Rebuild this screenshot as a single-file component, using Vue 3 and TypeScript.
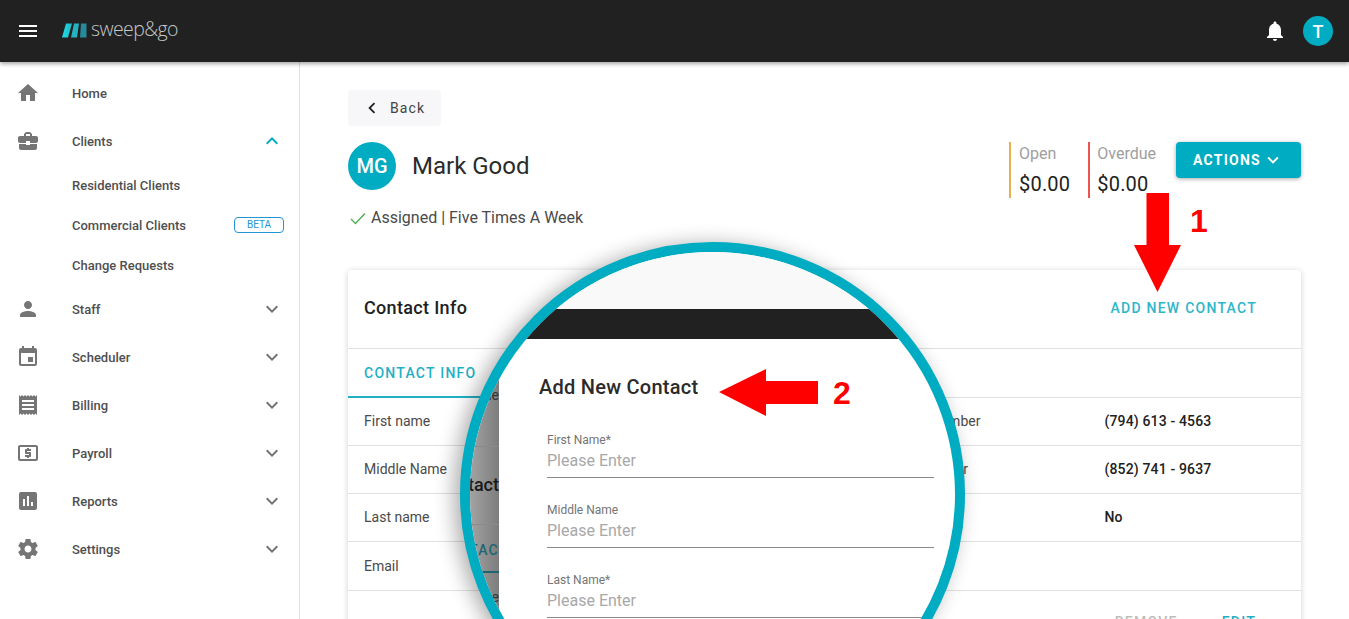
<script setup lang="ts">
interface NavItem {
  label: string
  icon: string
  open?: boolean
  noChevron?: boolean
  children?: { label: string; beta?: boolean }[]
}

const icons = {
  home: 'M10 20v-6h4v6h5v-8h3L12 3 2 12h3v8z',
  clients:
    'M10 16v-1H3.01L3 19c0 1.11.89 2 2 2h14c1.11 0 2-.89 2-2v-4h-7v1h-4zm10-9h-4.01V5l-2-2h-4l-2 2v2H4c-1.1 0-2 .9-2 2v3c0 1.11.89 2 2 2h6v-2h4v2h6c1.1 0 2-.9 2-2V9c0-1.1-.9-2-2-2zm-6 0h-4V5h4v2z',
  staff:
    'M12 12c2.21 0 4-1.79 4-4s-1.79-4-4-4-4 1.79-4 4 1.79 4 4 4zm0 2c-2.67 0-8 1.34-8 4v2h16v-2c0-2.66-5.33-4-8-4z',
  scheduler:
    'M17 12h-5v5h5v-5zM16 1v2H8V1H6v2H5c-1.11 0-1.99.9-1.99 2L3 19c0 1.1.89 2 2 2h14c1.1 0 2-.9 2-2V5c0-1.1-.9-2-2-2h-1V1h-2zm3 18H5V8h14v11z',
  billing:
    'M18 17H6v-2h12v2zm0-4H6v-2h12v2zm0-4H6V7h12v2zM3 22l1.5-1.5L6 22l1.5-1.5L9 22l1.5-1.5L12 22l1.5-1.5L15 22l1.5-1.5L18 22l1.5-1.5L21 22V2l-1.5 1.5L18 2l-1.5 1.5L15 2l-1.5 1.5L12 2l-1.5 1.5L9 2 7.5 3.5 6 2 4.5 3.5 3 2v20z',
  payroll:
    'M11 17h2v-1h1c.55 0 1-.45 1-1v-3c0-.55-.45-1-1-1h-3v-1h4V8h-2V7h-2v1h-1c-.55 0-1 .45-1 1v3c0 .55.45 1 1 1h3v1H9v2h2v1zm9-13H4c-1.11 0-1.99.89-1.99 2L2 18c0 1.11.89 2 2 2h16c1.11 0 2-.89 2-2V6c0-1.11-.89-2-2-2zm0 14H4V6h16v12z',
  reports:
    'M19 3H5c-1.1 0-2 .9-2 2v14c0 1.1.9 2 2 2h14c1.1 0 2-.9 2-2V5c0-1.1-.9-2-2-2zM9 17H7v-7h2v7zm4 0h-2V7h2v10zm4 0h-2v-4h2v4z',
  settings:
    'M19.43 12.98c.04-.32.07-.64.07-.98s-.03-.66-.07-.98l2.11-1.65c.19-.15.24-.42.12-.64l-2-3.46c-.12-.22-.39-.3-.61-.22l-2.49 1c-.52-.4-1.08-.73-1.69-.98l-.38-2.65C14.46 2.18 14.25 2 14 2h-4c-.25 0-.46.18-.49.42l-.38 2.65c-.61.25-1.17.59-1.69.98l-2.49-1c-.23-.09-.49 0-.61.22l-2 3.46c-.13.22-.07.49.12.64l2.11 1.65c-.04.32-.07.65-.07.98s.03.66.07.98l-2.11 1.65c-.19.15-.24.42-.12.64l2 3.46c.12.22.39.3.61.22l2.49-1c.52.4 1.08.73 1.69.98l.38 2.65c.03.24.24.42.49.42h4c.25 0 .46-.18.49-.42l.38-2.65c.61-.25 1.17-.59 1.69-.98l2.49 1c.23.09.49 0 .61-.22l2-3.46c.12-.22.07-.49-.12-.64l-2.11-1.65zM12 15.5c-1.93 0-3.5-1.57-3.5-3.5s1.57-3.5 3.5-3.5 3.5 1.57 3.5 3.5-1.57 3.5-3.5 3.5z',
}

const expandMore = 'M16.59 8.59L12 13.17 7.41 8.59 6 10l6 6 6-6z'
const expandLess = 'M12 8l-6 6 1.41 1.41L12 10.83l4.59 4.58L18 14z'

const nav: NavItem[] = [
  { label: 'Home', icon: icons.home, noChevron: true },
  {
    label: 'Clients',
    icon: icons.clients,
    open: true,
    children: [
      { label: 'Residential Clients' },
      { label: 'Commercial Clients', beta: true },
      { label: 'Change Requests' },
    ],
  },
  { label: 'Staff', icon: icons.staff },
  { label: 'Scheduler', icon: icons.scheduler },
  { label: 'Billing', icon: icons.billing },
  { label: 'Payroll', icon: icons.payroll },
  { label: 'Reports', icon: icons.reports },
  { label: 'Settings', icon: icons.settings },
]

const rows = [
  { left: 'First name', leftValue: 'Mark', right: 'Private Phone Number', rightValue: '(794) 613 - 4563' },
  { left: 'Middle Name', leftValue: '', right: 'Main Phone Number', rightValue: '(852) 741 - 9637' },
  { left: 'Last name', leftValue: 'Good', right: 'Gets SMS', rightValue: 'No' },
  { left: 'Email', leftValue: 'mark@example.com', right: '', rightValue: '', tall: true },
]

const fields = ['First Name*', 'Middle Name', 'Last Name*']
</script>

<template>
  <div class="page">
    <header class="topbar">
      <svg class="icon menu" viewBox="0 0 24 24"><path d="M3 18h18v-2H3v2zm0-5h18v-2H3v2zm0-7v2h18V6H3z" /></svg>
      <div class="logo">
        <svg width="25" height="15" viewBox="0 0 25 15">
          <defs>
            <linearGradient id="logo-a" x1="0" y1="0" x2="1" y2="0">
              <stop offset="0" stop-color="#1fe0e6" />
              <stop offset="1" stop-color="#1fb7c4" />
            </linearGradient>
          </defs>
          <polygon points="4,0.5 10,0.5 6,14.5 0,14.5" fill="url(#logo-a)" />
          <polygon points="12,0.5 17,0.5 15,14.5 9,14.5" fill="#25b3c2" />
          <polygon points="19,0.5 24.5,0.5 24.5,14.5 18,14.5" fill="#258a99" />
        </svg>
        <span class="logo-text">sweep&amp;go</span>
      </div>
      <div class="topbar-right">
        <svg class="icon bell" viewBox="0 0 24 24">
          <path d="M12 22c1.1 0 2-.9 2-2h-4c0 1.1.89 2 2 2zm6-6v-5c0-3.07-1.64-5.64-4.5-6.32V4c0-.83-.67-1.5-1.5-1.5s-1.5.67-1.5 1.5v.68C7.63 5.36 6 7.92 6 11v5l-2 2v1h16v-1l-2-2z" />
        </svg>
        <div class="user-avatar">T</div>
      </div>
    </header>

    <div class="body">
      <aside class="sidebar">
        <template v-for="item in nav" :key="item.label">
          <div class="nav-row">
            <svg class="icon nav-icon" viewBox="0 0 24 24"><path :d="item.icon" /></svg>
            <span class="nav-label">{{ item.label }}</span>
            <svg
              v-if="!item.noChevron"
              class="icon chevron"
              :class="{ open: item.open }"
              viewBox="0 0 24 24"
            >
              <path :d="item.open ? expandLess : expandMore" />
            </svg>
          </div>
          <div v-for="child in item.children" :key="child.label" class="nav-child">
            <span>{{ child.label }}</span>
            <span v-if="child.beta" class="beta">BETA</span>
          </div>
        </template>
      </aside>

      <main class="content">
        <button type="button" class="back">
          <svg class="icon" viewBox="0 0 24 24"><path d="M15.41 7.41L14 6l-6 6 6 6 1.41-1.41L10.83 12z" /></svg>
          Back
        </button>

        <div class="client-head">
          <div class="client-info">
            <div class="client-name-row">
              <div class="avatar">MG</div>
              <h1>Mark Good</h1>
            </div>
            <div class="status">
              <svg width="16" height="16" viewBox="0 0 16 16">
                <polyline points="1,9 5.5,13.5 15,3.5" fill="none" stroke="#4caf50" stroke-width="1.4" />
              </svg>
              Assigned | Five Times A Week
            </div>
          </div>
          <div class="balances">
            <div class="balance open-bal">
              <span class="bal-label">Open</span>
              <span class="bal-value">$0.00</span>
            </div>
            <div class="balance overdue-bal">
              <span class="bal-label">Overdue</span>
              <span class="bal-value">$0.00</span>
            </div>
            <button type="button" class="actions">
              ACTIONS
              <svg class="icon" viewBox="0 0 24 24"><path :d="expandMore" /></svg>
            </button>
          </div>
        </div>

        <section class="card">
          <div class="card-head">
            <h2>Contact Info</h2>
            <span class="add-contact">ADD NEW CONTACT</span>
          </div>
          <div class="tabs">
            <span class="tab">CONTACT INFO</span>
          </div>
          <div v-for="row in rows" :key="row.left" class="row" :class="{ tall: row.tall }">
            <div class="cell">
              <span class="cell-label">{{ row.left }}</span>
              <span class="cell-value">{{ row.leftValue }}</span>
            </div>
            <div class="cell">
              <span class="cell-label">{{ row.right }}</span>
              <span class="cell-value">{{ row.rightValue }}</span>
            </div>
          </div>
          <div class="card-actions">
            <span class="remove">REMOVE</span>
            <span class="edit">EDIT</span>
          </div>
        </section>
      </main>
    </div>

    <!-- magnifier callout sitting over the page -->
    <div class="lens">
      <div class="lens-top"></div>
      <div class="lens-band"></div>
      <div class="lens-body">
        <div class="lens-strip">
          <div class="strip-row strip-a"><span>Name</span></div>
          <div class="strip-row strip-b"><b>Contact</b></div>
          <div class="strip-row strip-c"><span>CONTAC</span></div>
          <div class="strip-row strip-d"><span>Name</span></div>
        </div>
        <div class="modal">
          <h3>Add New Contact</h3>
          <div v-for="field in fields" :key="field" class="field">
            <label>{{ field }}</label>
            <span class="placeholder">Please Enter</span>
          </div>
        </div>
      </div>
    </div>

    <svg class="arrow arrow-one" width="47" height="100" viewBox="0 0 47 100">
      <polygon points="12.5,0 35,0 35,52 47,52 23.5,99 0,52 12.5,52" fill="#ff0000" />
    </svg>
    <span class="callout-num num-one">1</span>
    <svg class="arrow arrow-two" width="99" height="47" viewBox="0 0 99 47">
      <polygon points="0,23 47,0 47,12 99,12 99,35 47,35 47,47" fill="#ff0000" />
    </svg>
    <span class="callout-num num-two">2</span>
  </div>
</template>

<style scoped>
.page {
  position: relative;
  height: 619px;
  overflow: hidden;
  background: #fff;
  color: #212121;
  font-family: Roboto, 'Liberation Sans', sans-serif;
}

.icon { width: 24px; height: 24px; fill: currentColor; flex: none; display: block; }

/* top bar */
.topbar {
  position: relative;
  z-index: 2;
  height: 62px;
  background: #212121;
  box-shadow: 0 2px 4px rgba(0, 0, 0, 0.35);
  display: flex;
  align-items: center;
  padding: 0 16px;
  color: #fff;
}
.menu { margin-top: -1px; }
.logo { display: flex; align-items: center; gap: 4px; margin: -2px 0 0 22px; }
.logo svg { display: block; }
.logo-text {
  font-family: 'Open Sans', sans-serif;
  font-weight: 300;
  font-size: 19.5px;
  letter-spacing: -0.6px;
  color: #c4c8ca;
  line-height: 24px;
  margin-top: -3px;
}
.topbar-right { margin-left: auto; display: flex; align-items: center; gap: 16px; }
.user-avatar {
  width: 30px;
  height: 30px;
  border-radius: 50%;
  background: #00acc1;
  display: flex;
  align-items: center;
  justify-content: center;
  font-size: 18px;
  font-weight: 500;
}

/* sidebar */
.body { display: flex; height: 557px; }
.sidebar {
  width: 300px;
  flex: none;
  box-sizing: border-box;
  border-right: 1px solid #e0e0e0;
  padding: 7px 16px 0;
}
.nav-row { height: 48px; display: flex; align-items: center; }
.nav-icon { color: #757575; }
.nav-label { margin-left: 32px; font-size: 13px; font-weight: 500; color: #4f4f4f; }
.chevron { margin-left: auto; margin-right: -1px; color: #757575; }
.chevron.open { color: #00acc1; }
.nav-child {
  height: 40px;
  display: flex;
  align-items: center;
  justify-content: space-between;
  padding-left: 56px;
  margin-right: -1px;
  font-size: 13px;
  font-weight: 500;
  color: #4f4f4f;
}
.beta {
  width: 50px;
  height: 16px;
  box-sizing: border-box;
  border: 1px solid #2196d3;
  border-radius: 4px;
  color: #2196d3;
  font-size: 10px;
  font-weight: 400;
  line-height: 14px;
  text-align: center;
}

/* main column */
.content { flex: 1; padding: 28px 48px 0; min-width: 0; }
.back {
  width: 93px;
  height: 36px;
  border: 0;
  border-radius: 4px;
  background: #f7f7f9;
  display: flex;
  align-items: center;
  gap: 7px;
  padding: 0 0 0 13px;
  color: #424242;
  font-family: inherit;
  font-size: 14px;
  letter-spacing: 1.1px;
}
.back .icon { width: 22px; height: 22px; color: #212121; }

.client-head { display: flex; justify-content: space-between; margin-top: 16px; }
.client-name-row { display: flex; align-items: center; gap: 16px; }
.avatar {
  width: 48px;
  height: 48px;
  border-radius: 50%;
  background: #00acc1;
  color: #fff;
  display: flex;
  align-items: center;
  justify-content: center;
  font-size: 20px;
  font-weight: 500;
}
h1 { margin: 0; font-size: 24px; font-weight: 400; color: #2b2b2b; }
.status {
  display: flex;
  align-items: center;
  gap: 5px;
  margin: 18px 0 0 2px;
  height: 19px;
  font-size: 16px;
  color: #4a4a4a;
}
.balances { display: flex; align-items: flex-start; }
.balance {
  height: 56px;
  box-sizing: border-box;
  padding-left: 8px;
  display: flex;
  flex-direction: column;
  justify-content: space-between;
  border-left: 2px solid #e8b04f;
  margin-right: 18px;
}
.overdue-bal { border-left-color: #ef5350; margin-right: 20px; padding-left: 7px; }
.bal-label { font-size: 16px; color: #9e9e9e; line-height: 22px; padding-top: 1px; }
.bal-value { font-size: 20px; color: #212121; line-height: 28px; letter-spacing: 0.2px; }
.actions {
  width: 125px;
  height: 36px;
  border: 0;
  border-radius: 4px;
  background: #00acc1;
  color: #fff;
  box-shadow: 0 1px 4px rgba(0, 0, 0, 0.35);
  display: flex;
  align-items: center;
  justify-content: center;
  gap: 1px;
  font-family: inherit;
  font-size: 14px;
  font-weight: 700;
  letter-spacing: 1.25px;
}
.actions .icon { width: 22px; height: 22px; }

/* contact card */
.card {
  margin-top: 43px;
  border-radius: 4px;
  background: #fff;
  box-shadow: 0 1px 6px rgba(0, 0, 0, 0.18);
}
.card-head {
  height: 79px;
  box-sizing: border-box;
  padding: 0 44px 3px 16px;
  display: flex;
  align-items: center;
  justify-content: space-between;
  border-bottom: 1px solid #e0e0e0;
}
h2 { margin: 0; font-size: 18px; font-weight: 500; letter-spacing: 0.33px; color: #212121; }
.add-contact { font-size: 14px; font-weight: 500; letter-spacing: 1.25px; color: #2fb5c9; }
.tabs { height: 48px; border-bottom: 1px solid #e0e0e0; display: flex; }
.tab {
  width: 144px;
  box-sizing: border-box;
  padding-left: 16px;
  line-height: 48px;
  height: 49px;
  font-size: 14px;
  font-weight: 500;
  letter-spacing: 1.25px;
  color: #1fb0c6;
  border-bottom: 2px solid #1fb0c6;
}
.row {
  display: grid;
  grid-template-columns: 1fr 1fr;
  height: 47px;
  border-bottom: 1px solid #e0e0e0;
}
.row.tall { height: 48px; }
.cell { display: grid; grid-template-columns: 280px 1fr; align-items: center; padding: 0 0 2px 16px; font-size: 14px; }
.row.tall .cell { padding-bottom: 0; }
.cell-label { color: #4a4a4a; margin-right: -16px; }
.cell-value { font-weight: 500; color: #212121; margin-left: -16px; letter-spacing: 0.15px; }
.card-actions {
  display: flex;
  justify-content: flex-end;
  gap: 44px;
  padding: 23px 45px 20px 0;
  font-size: 14px;
  font-weight: 500;
  letter-spacing: 1.25px;
}
.remove { color: #bdbdbd; }
.edit { color: #1fb0c6; }

/* magnifier */
.lens {
  position: absolute;
  left: 460px;
  top: 242px;
  z-index: 3;
  width: 505px;
  height: 505px;
  box-sizing: border-box;
  border: 10px solid #00acc1;
  border-radius: 50%;
  overflow: hidden;
  background: #fff;
  box-shadow: -6px 2px 20px rgba(0, 0, 0, 0.32);
}
.lens-top { height: 57px; background: #f9f9fa; }
.lens-band { height: 30px; background: #212121; }
.lens-body { display: flex; }
.lens-strip {
  width: 29px;
  flex: none;
  overflow: hidden;
  background: linear-gradient(90deg, #a3a3a3, #7d7d7d);
  color: #333;
}
.strip-row {
  display: flex;
  justify-content: flex-end;
  white-space: nowrap;
  box-sizing: border-box;
  font-size: 14px;
  border-bottom: 1px solid #8a8a8a;
}
.strip-a { height: 108px; padding-top: 48px; }
.strip-b { height: 78px; padding-top: 27px; font-size: 18px; }
.strip-b b { font-weight: 500; color: #1a1a1a; }
.strip-c {
  height: 48px;
  padding-top: 17px;
  font-weight: 500;
  letter-spacing: 1.25px;
  color: #1d6670;
  border-bottom: 2px solid #1d6670;
}
.strip-d { height: 40px; padding-top: 16px; border-bottom: 0; }

.modal { flex: 1; padding: 36px 0 0 40px; }
h3 {
  margin: 0 0 9px;
  font-size: 20px;
  line-height: 24px;
  font-weight: 500;
  letter-spacing: 0.25px;
  color: #2b2b2b;
}
.field {
  width: 387px;
  height: 70px;
  margin-left: 8px;
  box-sizing: border-box;
  display: flex;
  flex-direction: column;
  justify-content: flex-end;
  align-items: flex-start;
}
.field label { font-size: 12px; color: #757575; line-height: 14px; }
.placeholder {
  align-self: stretch;
  font-size: 16px;
  color: #a8a8a8;
  line-height: 22px;
  padding: 3px 0 5px;
  border-bottom: 1px solid #8a8a8a;
}

/* red callouts */
.arrow { position: absolute; z-index: 4; display: block; }
.arrow-one { left: 1134px; top: 193px; }
.arrow-two { left: 719px; top: 369px; }
.callout-num {
  position: absolute;
  z-index: 4;
  font-family: 'Liberation Sans', Arial, sans-serif;
  font-weight: 700;
  font-size: 32px;
  line-height: 32px;
  color: #ff0000;
}
.num-one { left: 1190px; top: 205px; }
.num-two { left: 833px; top: 377px; }
</style>

<style>
html, body { margin: 0; padding: 0; overflow: hidden; }
</style>
